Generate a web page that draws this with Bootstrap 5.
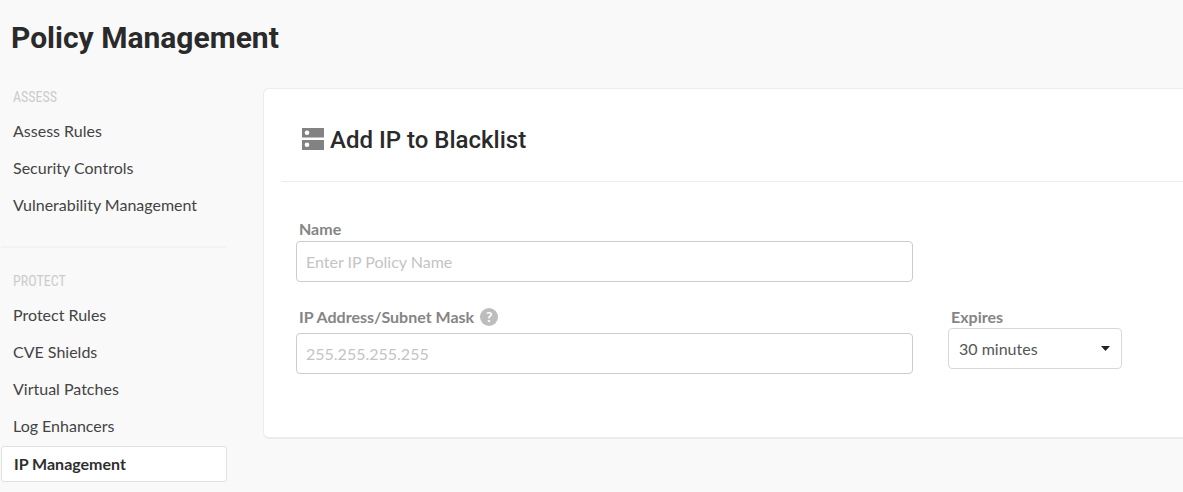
<!DOCTYPE html>
<html lang="en">
<head>
<meta charset="utf-8">
<meta name="viewport" content="width=device-width, initial-scale=1">
<title>Policy Management</title>
<link href="https://cdn.jsdelivr.net/npm/bootstrap@5.3.0/dist/css/bootstrap.min.css" rel="stylesheet">
<style>
  body { background: #f9f9f9; color: #444; font-family: Lato, sans-serif; font-size: 16px; line-height: 20px; }
  .page-title { font: 700 30px/36px Roboto, sans-serif; color: #2a2a2a; padding: 20px 11px 32px; }
  .side-nav { width: 227px; padding-left: 1px; }
  .side-heading { font: 400 14px/18px "Roboto Condensed", "Liberation Sans Narrow", sans-serif; color: #ccc; padding-left: 12px; margin-bottom: 6px; }
  .side-nav .nav-link { color: #444; line-height: 37px; padding: 0 12px; }
  .side-nav .nav-link.active { color: #2f2f2f; background: #fff; border: 1px solid #e2e2e2; border-radius: 3px; font-weight: 700; line-height: 34px; margin-top: 2px; }
  .side-rule { border-top: 2px solid #f3f3f3; margin: 23px 0 24px; }
  .policy-card { border: 1px solid #ececec; border-right: 0; border-bottom-width: 2px; border-radius: 6px 0 0 6px; margin-left: 36px; }
  .policy-head { margin-left: 17px; padding: 33px 21px 22px; border-bottom: 1px solid #ececec; }
  .policy-head h2 { font: 500 24px/37px Roboto, sans-serif; color: #2a2a2a; gap: 6px; }
  .policy-form { display: grid; grid-template-columns: minmax(0, 1fr) 174px; column-gap: 35px; padding: 37px 61px 63px 32px; }
  .field-label { font-weight: 700; line-height: 20px; color: #858585; padding-left: 3px; }
  .policy-form .form-control, .policy-form .form-select { height: 41px; border: 1px solid #ccc; border-radius: 4px; font-size: 16px; padding: 0 9px; color: #555; }
  .policy-form .form-control::placeholder { color: #c4c4c4; }
  .policy-form .form-select { border-color: #d8d8d8; padding-left: 10px; background: #fff url("data:image/svg+xml,%3Csvg xmlns='http://www.w3.org/2000/svg' viewBox='0 0 9 5'%3E%3Cpath fill='%23222' d='M0 0h9L4.500 5z'/%3E%3C/svg%3E") no-repeat right 11px center / 9px 5px; }
  .name-label { margin-bottom: 2px; }
  .expires-label { margin-bottom: 1px; }
  .name-field { margin-bottom: 25px; }
  .mask-label { margin-bottom: 6px; }
  .help-dot { width: 18px; height: 18px; border: 0; border-radius: 50%; background: #bdbdbd; color: #fff; font: 700 14px/18px Lato, sans-serif; padding: 0; margin-left: 6px; }
</style>
</head>
<body>
<header><h1 class="page-title m-0">Policy Management</h1></header>
<div class="d-flex align-items-start">
  <nav class="side-nav flex-shrink-0" aria-label="Policies">
    <div class="side-heading">ASSESS</div>
    <div class="nav flex-column">
      <a class="nav-link" href="#">Assess Rules</a>
      <a class="nav-link" href="#">Security Controls</a>
      <a class="nav-link" href="#">Vulnerability Management</a>
    </div>
    <div class="side-rule"></div>
    <div class="side-heading">PROTECT</div>
    <div class="nav flex-column">
      <a class="nav-link" href="#">Protect Rules</a>
      <a class="nav-link" href="#">CVE Shields</a>
      <a class="nav-link" href="#">Virtual Patches</a>
      <a class="nav-link" href="#">Log Enhancers</a>
      <a class="nav-link active" aria-current="page" href="#">IP Management</a>
    </div>
  </nav>
  <main class="policy-card bg-white flex-grow-1">
    <div class="policy-head">
      <h2 class="d-flex align-items-center m-0">
        <svg class="mb-1" width="22" height="22" viewBox="0 0 22 22" aria-hidden="true">
          <path fill="#828282" d="M0 0h22v9.500H0zM0 12h22v10H0z"/>
          <circle cx="5" cy="4.800" r="2.300" fill="#fff"/><circle cx="5" cy="16.800" r="2.300" fill="#fff"/>
        </svg>Add IP to Blacklist
      </h2>
    </div>
    <form class="policy-form align-items-start">
      <div class="name-field">
        <label class="field-label name-label d-block" for="policy-name">Name</label>
        <input class="form-control" id="policy-name" type="text" placeholder="Enter IP Policy Name">
      </div>
      <div></div>
      <div>
        <div class="mask-label d-flex align-items-center">
          <label class="field-label" for="ip-mask">IP Address/Subnet Mask</label>
          <button class="help-dot" type="button" aria-label="Help">?</button>
        </div>
        <input class="form-control" id="ip-mask" type="text" placeholder="255.255.255.255">
      </div>
      <div>
        <label class="field-label expires-label d-block" for="expires">Expires</label>
        <select class="form-select" id="expires"><option>30 minutes</option></select>
      </div>
    </form>
  </main>
</div>
<script src="https://cdn.jsdelivr.net/npm/bootstrap@5.3.0/dist/js/bootstrap.bundle.min.js"></script>
</body>
</html>
